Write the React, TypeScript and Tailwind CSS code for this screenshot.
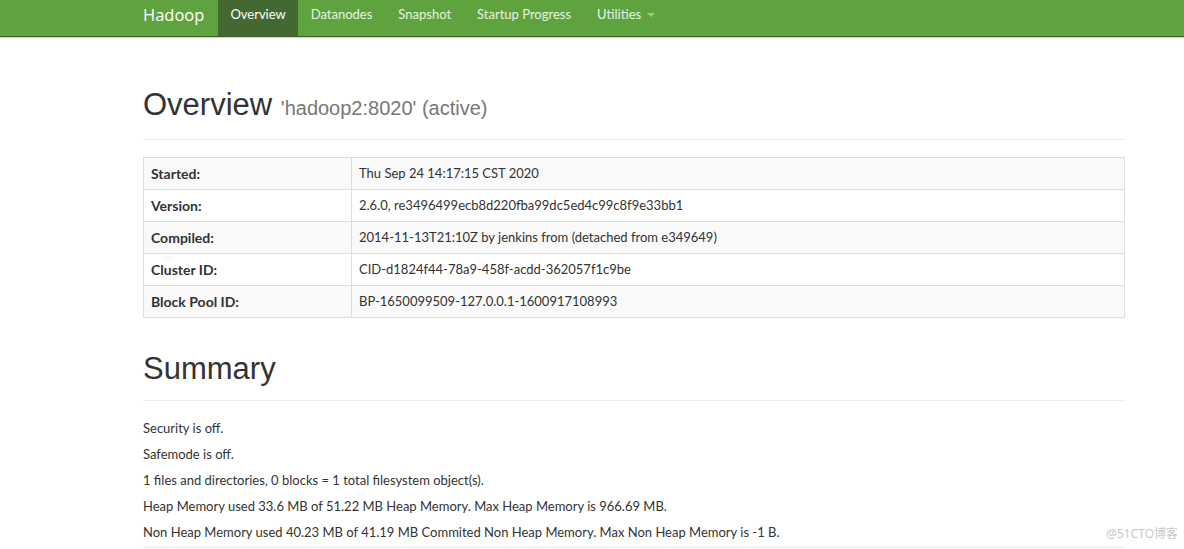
import React from "react";

const rows: [string, string][] = [
  ["Started:", "Thu Sep 24 14:17:15 CST 2020"],
  ["Version:", "2.6.0, re3496499ecb8d220fba99dc5ed4c99c8f9e33bb1"],
  ["Compiled:", "2014-11-13T21:10Z by jenkins from (detached from e349649)"],
  ["Cluster ID:", "CID-d1824f44-78a9-458f-acdd-362057f1c9be"],
  ["Block Pool ID:", "BP-1650099509-127.0.0.1-1600917108993"],
];

const lines = [
  "Security is off.",
  "Safemode is off.",
  "1 files and directories, 0 blocks = 1 total filesystem object(s).",
  "Heap Memory used 33.6 MB of 51.22 MB Heap Memory. Max Heap Memory is 966.69 MB.",
  "Non Heap Memory used 40.23 MB of 41.19 MB Commited Non Heap Memory. Max Non Heap Memory is -1 B.",
];

export default function App() {
  const body = { fontFamily: "Lato, 'Noto Sans', sans-serif" };
  const head = { fontFamily: "'Liberation Sans', Arial, sans-serif" };
  return (
    <div className="relative w-[1184px] h-[549px] overflow-hidden bg-white text-[#333]" style={body}>
      <nav className="h-[37px] bg-[#5fa33e] border-b border-[#3e6329] shadow-[0_1px_0_#d0d0d0]">
        <div className="ml-[143px] flex h-full items-stretch text-[13px]">
          <div className="flex items-center pb-[5px] pr-[14px] text-[16.5px] text-white" style={{ fontFamily: "'Open Sans', sans-serif" }}>Hadoop</div>
          <div className="flex items-center px-[12px] pb-[6px] bg-[#436831] text-white">Overview</div>
          {["Datanodes", "Snapshot", "Startup Progress"].map((t) => (
            <div key={t} className="flex items-center px-[13px] pb-[6px] text-[#e8f2e2]">{t}</div>
          ))}
          <div className="flex items-center px-[13px] pb-[6px] text-[#e8f2e2]">
            Utilities
            <span className="ml-[6px] inline-block w-0 h-0 border-l-[4px] border-r-[4px] border-t-[4px] border-l-transparent border-r-transparent border-t-[#9fcb89]" />
          </div>
        </div>
      </nav>

      <div className="ml-[143px] w-[982px]">
        <div className="pt-[51px] h-[103px] border-b border-[#eeeeee]">
          <h1 className="text-[31px] leading-[34px] font-normal" style={head}>
            Overview <span className="text-[20px] text-[#777]">'hadoop2:8020' (active)</span>
          </h1>
        </div>

        <table className="mt-[17px] w-full border border-[#dddddd] border-collapse text-[13px]">
          <tbody>
            {rows.map(([k, v], i) => (
              <tr key={k} className={i % 2 === 0 ? "bg-[#f9f9f9]" : "bg-white"}>
                <th className="h-[32px] w-[208px] border border-[#dddddd] px-[7px] text-left font-bold text-[14px]">{k}</th>
                <td className="h-[32px] border border-[#dddddd] px-[7px]">{v}</td>
              </tr>
            ))}
          </tbody>
        </table>

        <div className="pt-[34px] h-[83px] border-b border-[#eeeeee]">
          <h1 className="text-[31px] leading-[34px] font-normal" style={head}>Summary</h1>
        </div>

        <div className="pt-[14px] text-[13px]">
          {lines.map((l) => (
            <p key={l} className="h-[26px] leading-[26px]">{l}</p>
          ))}
        </div>
        <div className="mt-[2px] border-b border-[#eeeeee]" />
      </div>

      <div className="absolute right-[6px] bottom-[6px] text-[12px] text-[#c8c8c8]" style={{ fontFamily: "'Noto Sans', 'Noto Sans CJK SC', sans-serif" }}>
        @51CTO博客
      </div>
    </div>
  );
}
